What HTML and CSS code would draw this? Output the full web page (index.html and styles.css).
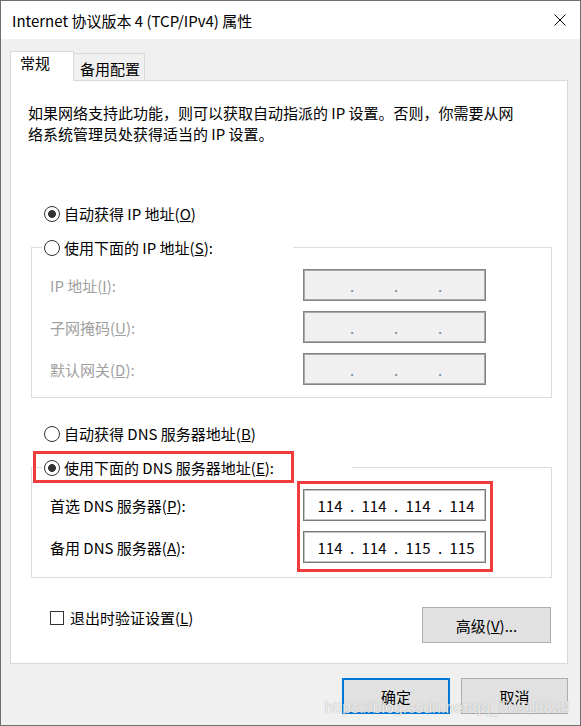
FILE: index.html
```html
<!DOCTYPE html>
<html lang="zh-CN">
<head>
  <meta charset="UTF-8">
  <title>Internet 协议版本 4 (TCP/IPv4) 属性</title>
  <link rel="stylesheet" href="styles.css">
</head>
<body>
  <div class="window">
    <div class="titlebar">
      <span class="title">Internet 协议版本 4 (TCP/IPv4) 属性</span>
      <svg class="close" width="12" height="12" viewBox="0 0 12 12">
        <path d="M0.5 0.5L11.5 11.5M11.5 0.5L0.5 11.5" stroke="#000" stroke-width="1" fill="none"/>
      </svg>
    </div>

    <div class="content">
      <div class="tabs">
        <div class="tab active">常规</div>
        <div class="tab second">备用配置</div>
      </div>

      <div class="panel">
        <p class="intro">如果网络支持此功能，则可以获取自动指派的 IP 设置。否则，你需要从网<br>络系统管理员处获得适当的 IP 设置。</p>

        <label class="option option-auto-ip"><input type="radio" name="ip" checked>自动获得 IP 地址(<u>O</u>)</label>

        <fieldset class="group group-ip">
          <legend class="option legend-ip"><input type="radio" name="ip">使用下面的 IP 地址(<u>S</u>):</legend>
          <div class="fields">
            <span class="field-label disabled">IP 地址(<u>I</u>):</span>
            <div class="ipbox disabled"><span></span><i>.</i><span></span><i>.</i><span></span><i>.</i><span></span></div>
            <span class="field-label disabled">子网掩码(<u>U</u>):</span>
            <div class="ipbox disabled"><span></span><i>.</i><span></span><i>.</i><span></span><i>.</i><span></span></div>
            <span class="field-label disabled">默认网关(<u>D</u>):</span>
            <div class="ipbox disabled"><span></span><i>.</i><span></span><i>.</i><span></span><i>.</i><span></span></div>
          </div>
        </fieldset>

        <label class="option option-auto-dns"><input type="radio" name="dns">自动获得 DNS 服务器地址(<u>B</u>)</label>

        <fieldset class="group group-dns">
          <legend class="option legend-dns"><input type="radio" name="dns" checked>使用下面的 DNS 服务器地址(<u>E</u>):<span class="mark mark-legend"></span></legend>
          <div class="fields fields-dns">
            <span class="field-label">首选 DNS 服务器(<u>P</u>):</span>
            <div class="ipbox"><span>114</span><i>.</i><span>114</span><i>.</i><span>114</span><i>.</i><span>114</span></div>
            <span class="field-label">备用 DNS 服务器(<u>A</u>):</span>
            <div class="ipbox"><span>114</span><i>.</i><span>114</span><i>.</i><span>115</span><i>.</i><span>115</span></div>
            <span class="mark mark-dns"></span>
          </div>
        </fieldset>

        <div class="bottom-row">
          <label class="check"><input type="checkbox">退出时验证设置(<u>L</u>)</label>
          <button class="btn btn-advanced">高级(<u>V</u>)...</button>
        </div>
      </div>

      <div class="footer">
        <button class="btn btn-default">确定</button>
        <button class="btn">取消</button>
      </div>
    </div>

    <div class="watermark">https://blog.csdn.net/qq_50918834</div>
  </div>
</body>
</html>
```

FILE: styles.css
```css
body {
  margin: 0;
  font-family: "Noto Sans CJK SC", sans-serif;
  font-size: 15px;
  color: #000;
  background: #f0f0f0;
}
.window {
  position: relative;
  width: 581px;
  height: 726px;
  box-sizing: border-box;
  border: 1px solid #707070;
  background: #f0f0f0;
}
.titlebar {
  height: 38px;
  display: flex;
  align-items: center;
  justify-content: space-between;
  padding: 0 14px 0 11px;
  background: #fff;
  line-height: 21px;
}
.close {
  display: block;
}
.content {
  padding: 12px 12px 0 9px;
}
.tabs {
  display: flex;
  align-items: flex-end;
  height: 29px;
}
.tab {
  box-sizing: border-box;
  height: 27px;
  width: 72px;
  margin-left: -1px;
  padding: 4px 0 0 6px;
  border: 1px solid #d9d9d9;
  border-bottom: none;
  background: #f0f0f0;
  line-height: 21px;
}
.tab.active {
  position: relative;
  z-index: 1;
  width: 64px;
  height: 30px;
  margin-left: 0;
  margin-bottom: -1px;
  padding: 0 0 0 9px;
  background: #fff;
}
.panel {
  height: 584px;
  box-sizing: border-box;
  border: 1px solid #d9d9d9;
  background: #fff;
  padding-bottom: 20px;
}
.intro {
  margin: 21px 0 0 17px;
  line-height: 21px;
}
.option {
  display: flex;
  align-items: center;
  height: 21px;
  line-height: 21px;
  white-space: nowrap;
}
.option-auto-ip {
  margin: 59px 0 0 33px;
}
.option-auto-dns {
  margin: 25px 0 0 33px;
}
input[type="radio"] {
  -webkit-appearance: none;
  appearance: none;
  width: 16px;
  height: 16px;
  margin: 0 4px 0 0;
  border: 1px solid #333;
  border-radius: 50%;
  background: #fff;
  flex: none;
}
input[type="radio"]:checked {
  background: radial-gradient(circle, #333 0 3.6px, #fff 4.2px);
}
input[type="checkbox"] {
  -webkit-appearance: none;
  appearance: none;
  width: 14px;
  height: 14px;
  margin: 0 6px 0 0;
  border: 1px solid #333;
  background: #fff;
  flex: none;
}
.group {
  margin: 13px 15px 0 20px;
  padding: 0;
  border: 1px solid #dcdcdc;
  min-width: 0;
}
.group legend {
  position: relative;
  box-sizing: border-box;
  margin-left: 10px;
  padding: 0 0 0 2px;
}
.legend-ip {
  width: 251px;
}
.legend-dns {
  width: 310px;
}
.fields {
  position: relative;
  display: grid;
  grid-template-columns: 253px 183px;
  row-gap: 10px;
  align-items: center;
  padding: 11px 0 12px 18px;
}
.fields-dns {
  padding-bottom: 14px;
}
.field-label {
  line-height: 21px;
  white-space: nowrap;
}
.disabled {
  color: #a0a0a0;
}
.ipbox {
  box-sizing: border-box;
  display: flex;
  align-items: center;
  width: 183px;
  height: 32px;
  padding-left: 8px;
  border: 1px solid #7a7a7a;
  box-shadow: inset 0 0 0 1px #c4c4c4;
  background: #fff;
  line-height: 21px;
}
.ipbox.disabled {
  background: #f0f0f0;
  border-color: #858585;
  box-shadow: inset 0 0 0 1px #a9a9a9;
  color: #7d8590;
}
.ipbox span {
  width: 36px;
  text-align: center;
}
.ipbox i {
  width: 8px;
  font-style: normal;
  text-align: center;
}
.mark {
  position: absolute;
  box-sizing: border-box;
  border: 3px solid #f03c3c;
  pointer-events: none;
}
.mark-legend {
  left: -9px;
  top: -6px;
  width: 261px;
  height: 32px;
}
.mark-dns {
  left: 265px;
  top: 3px;
  width: 196px;
  height: 91px;
}
.bottom-row {
  display: flex;
  justify-content: space-between;
  align-items: flex-start;
  margin-top: 29px;
  padding: 0 16px 0 39px;
}
.check {
  display: flex;
  align-items: center;
  line-height: 21px;
}
.btn {
  box-sizing: border-box;
  height: 36px;
  width: 107px;
  padding: 0;
  border: 1px solid #adadad;
  background: #e1e1e1;
  font: inherit;
  color: #000;
  line-height: 21px;
}
.btn-advanced {
  width: 129px;
}
.btn-default {
  width: 108px;
  border: 2px solid #0078d7;
}
.footer {
  display: flex;
  justify-content: flex-end;
  gap: 11px;
  margin-top: 14px;
  padding-right: 0;
}
.watermark {
  position: absolute;
  right: 10px;
  top: 697px;
  font-family: "Liberation Sans", Arial, sans-serif;
  font-size: 16px;
  line-height: 20px;
  color: rgba(255, 255, 255, 0.8);
  text-shadow: 0 0 1px rgba(90, 90, 90, 0.55);
}
```
